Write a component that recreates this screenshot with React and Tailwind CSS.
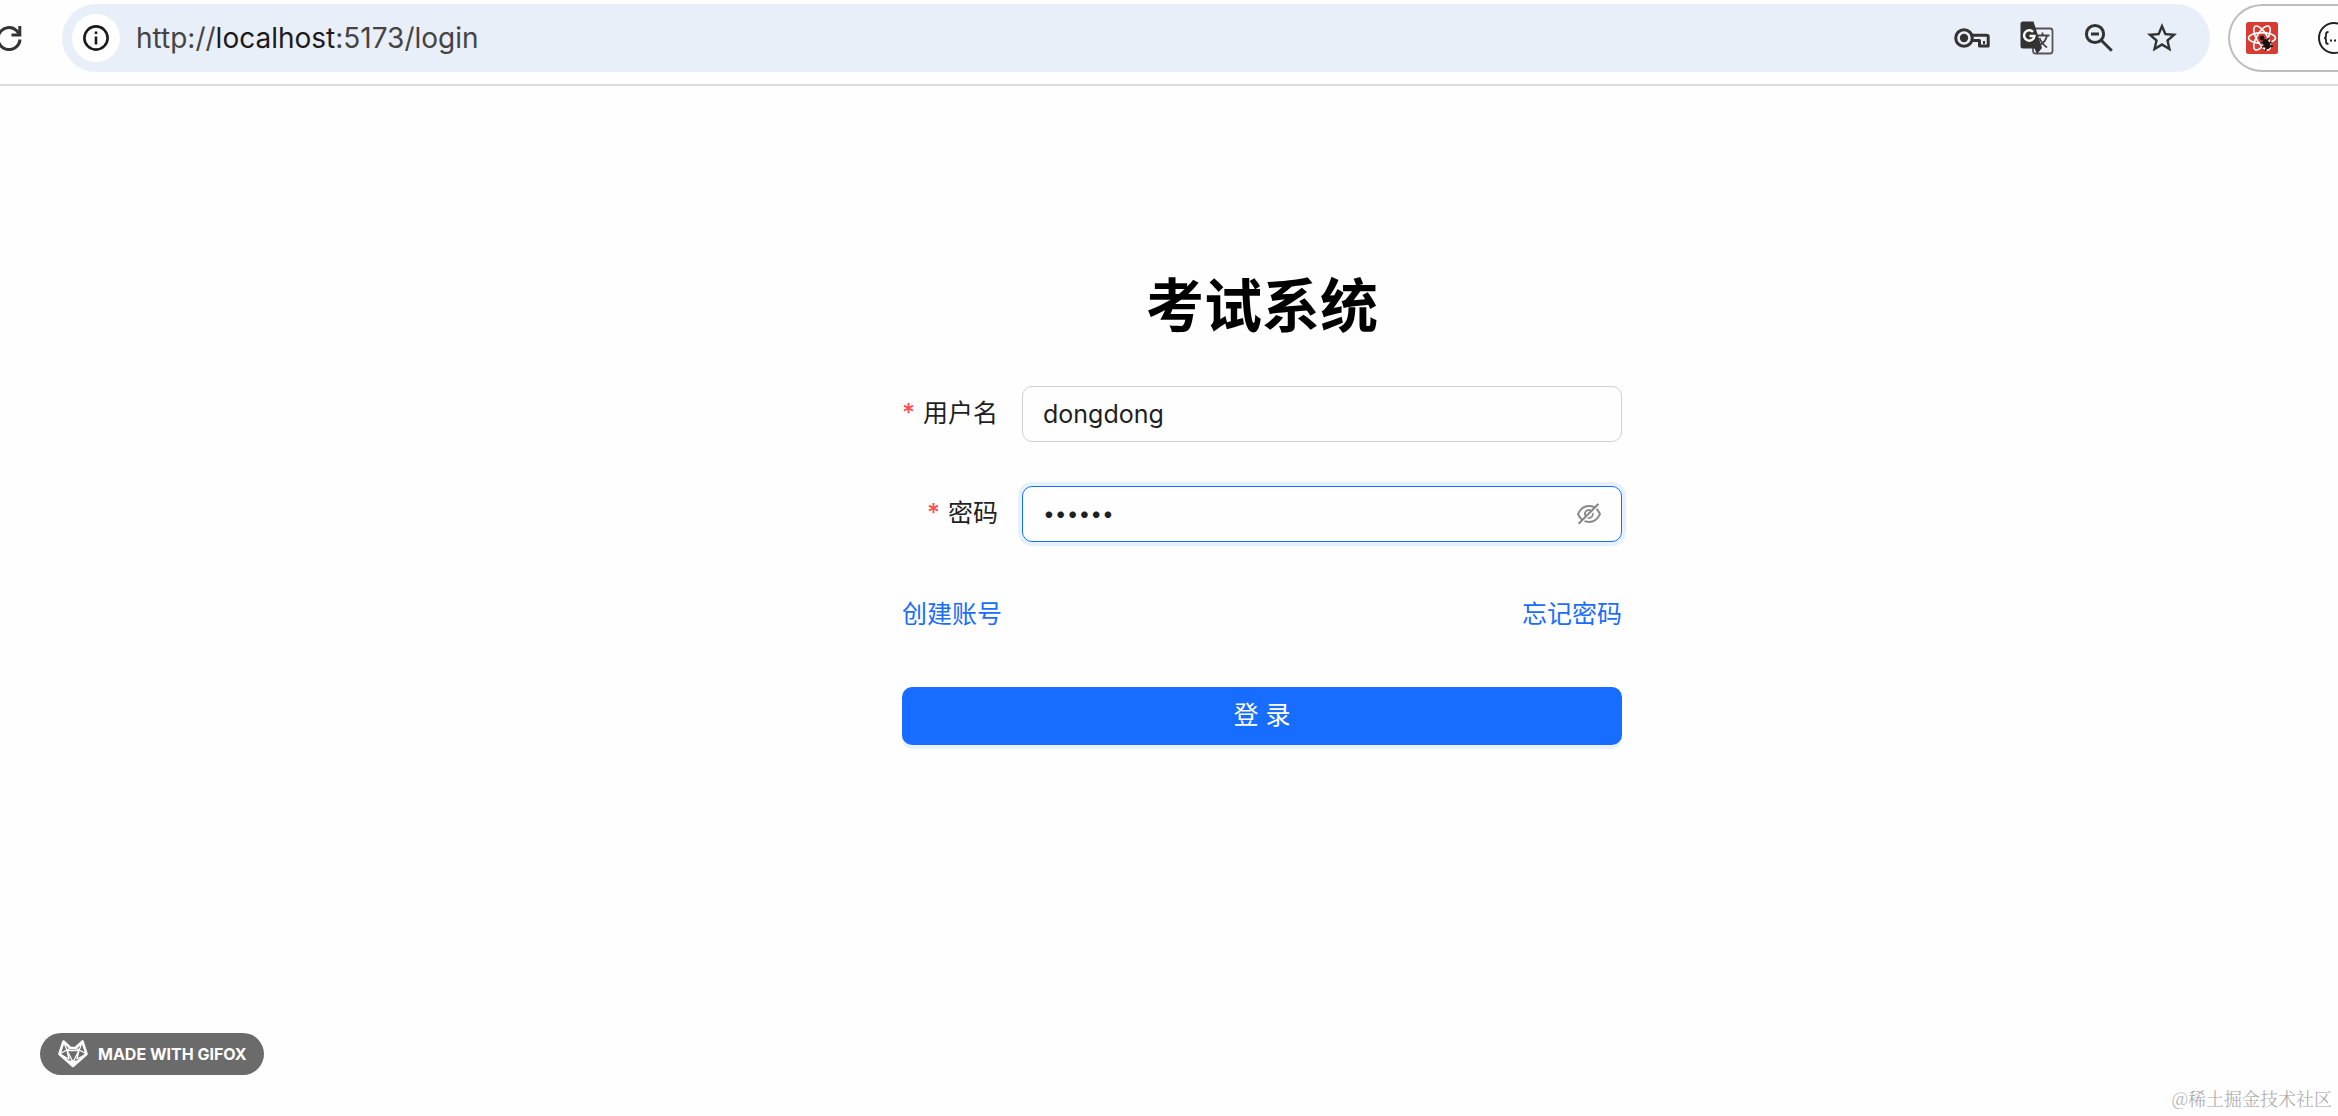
import { useState } from 'react';
import { MdStarBorder } from 'react-icons/md';
import { AiOutlineEyeInvisible, AiOutlineEye } from 'react-icons/ai';

const ReloadIcon = () => (
  <svg width="24" height="26" viewBox="0 0 24 26" fill="none" stroke="#333" strokeWidth="3">
    <path d="M22 14.5A11 11 0 1 1 18.5 5.5L21 8.5" />
    <path d="M21.8 1v9H13.5" />
  </svg>
);

const InfoIcon = () => (
  <svg width="26" height="26" viewBox="0 0 26 26" fill="none" stroke="#1b1b1b" strokeWidth="2.6">
    <circle cx="13" cy="13" r="11.6" />
    <path d="M13 11.5v8M13 6.5v2.6" />
  </svg>
);

const KeyIcon = () => (
  <svg width="36" height="22" viewBox="0 0 36 22" fill="none" stroke="#333" strokeWidth="3">
    <circle cx="10" cy="11" r="8.3" />
    <circle cx="10" cy="11" r="4.2" fill="#333" stroke="none" />
    <path d="M17.6 8.2h15c1.1 0 1.6.6 1.6 1.6v9.2h-8.7v-5.6h-8" strokeLinejoin="round" />
    <path d="M30 14v3" strokeWidth="2" />
  </svg>
);

const TranslateIcon = () => (
  <svg width="34" height="34" viewBox="0 0 34 34">
    <rect x="13" y="7.5" width="19.500" height="25" rx="2.5" fill="#eef2fa" stroke="#555" strokeWidth="1.8" />
    <path d="M3 .5h10.500L22 27l-5 6-2.500-5.500H3A2.500 2.500 0 0 1 .5 25V3A2.500 2.500 0 0 1 3 .5z" fill="#333" />
    <path d="M17 14.500h12.500M22.500 11.500v3M27 14.500c-.8 4-3.500 7.500-7 9.500M19.500 17c1.500 4 4 7 7.500 9.500" fill="none" stroke="#444" strokeWidth="1.8" />
    <path d="M13 10.800A5.200 5.200 0 1 0 14.500 15H9.500" fill="none" stroke="#fff" strokeWidth="2.4" />
  </svg>
);

const ZoomOutIcon = () => (
  <svg width="30" height="30" viewBox="0 0 30 30" fill="none" stroke="#333" strokeWidth="3">
    <circle cx="11" cy="11" r="8.6" />
    <path d="M17.2 17.2L27.800 27.800M7 11h8" />
  </svg>
);

const ReactDevIcon = () => (
  <svg width="32" height="32" viewBox="0 0 32 32">
    <rect width="32" height="32" rx="2.5" fill="#d83b31" />
    <g fill="none" stroke="#fff" strokeWidth="1.6">
      <ellipse cx="16" cy="16" rx="13.5" ry="5.4" />
      <ellipse cx="16" cy="16" rx="13.5" ry="5.4" transform="rotate(60 16 16)" />
      <ellipse cx="16" cy="16" rx="13.5" ry="5.4" transform="rotate(120 16 16)" />
    </g>
    <circle cx="16" cy="16" r="2.4" fill="#1c1414" />
    <g transform="rotate(-30 20.5 22)" fill="#1c1414" stroke="#1c1414" strokeWidth="1.6">
      <ellipse cx="20.5" cy="22" rx="2.4" ry="4.4" />
      <path d="M15.500 18l4 2M15 22.500h11M16 27l4-2M25.500 18l-4 2M25 27l-4-2" />
    </g>
  </svg>
);

const JsonIcon = () => (
  <svg width="32" height="32" viewBox="0 0 32 32">
    <circle cx="16" cy="16" r="15" fill="#fff" stroke="#222" strokeWidth="2" />
    <path d="M10.500 10c-2 0-2.500.8-2.500 2.300v1.600c0 1.200-.6 2-1.800 2.100 1.200.1 1.800.9 1.800 2.100v1.600c0 1.500.5 2.300 2.500 2.300" fill="none" stroke="#222" strokeWidth="1.8" />
    <path d="M12 18.500h2M16 18.500h2M20 18.500h2" stroke="#222" strokeWidth="2" />
  </svg>
);

const FoxIcon = () => (
  <svg width="30" height="28" viewBox="0 0 30 28" fill="none" stroke="#fff" strokeLinejoin="round">
    <path d="M5.500 1.500L12.500 8h5L24.500 1.500l4 12.500L15 26 1.500 14z" strokeWidth="2.6" />
    <path d="M5.500 1.500L9 10.500h12l3.500-9M1.500 14L12.500 8M28.500 14L17.500 8M9 10.500L15 22l6-11.500M1.500 14l9.500 5 -2-8.500M28.500 14L19 19l2-8.500" strokeWidth="1.3" />
    <path d="M11 21h8l-4 5z" fill="#fff" />
  </svg>
);

function BrowserBar() {
  return (
    <header className="flex h-[86px] items-start overflow-hidden border-b-2 border-[#dcdcdc] pt-1">
      <button aria-label="Reload" className="-ml-0.5 flex h-[68px] w-16 shrink-0 items-center">
        <ReloadIcon />
      </button>
      <div className="flex h-[68px] min-w-0 flex-1 items-center rounded-full bg-[#e9eff9] pl-2.5 pr-[30px]">
        <button aria-label="Site information" className="flex size-12 shrink-0 items-center justify-center rounded-full bg-[#fefefe]">
          <InfoIcon />
        </button>
        <div className="ml-4 flex-1 truncate font-[Inter,sans-serif] text-[28px] text-[#444]">
          http://<span className="text-[#1b1b1b]">localhost</span>:5173/login
        </div>
        <div className="flex shrink-0 items-center gap-[30px]">
          <button aria-label="Passwords"><KeyIcon /></button>
          <button aria-label="Translate"><TranslateIcon /></button>
          <button aria-label="Zoom out"><ZoomOutIcon /></button>
          <button aria-label="Bookmark"><MdStarBorder size={36} color="#333" /></button>
        </div>
      </div>
      <div className="ml-[18px] flex h-[68px] w-[110px] shrink-0 items-center gap-10 rounded-l-full border-2 border-r-0 border-[#bdbdbd] pl-4">
        <button aria-label="React Developer Tools" className="shrink-0"><ReactDevIcon /></button>
        <button aria-label="JSON viewer" className="shrink-0"><JsonIcon /></button>
      </div>
    </header>
  );
}

function Field({ id, label, children }) {
  return (
    <div className="flex h-14 items-center justify-end">
      <label htmlFor={id} className="mr-6 shrink-0 whitespace-nowrap">
        <span className="mr-2 font-medium text-[#ff4d4f]">*</span>{label}
      </label>
      {children}
    </div>
  );
}

export default function App() {
  const [username, setUsername] = useState('dongdong');
  const [password, setPassword] = useState('123456');
  const [visible, setVisible] = useState(false);

  return (
    <div className="relative min-h-screen overflow-hidden bg-[#fefefe] font-[Inter,'Noto_Sans_CJK_SC',sans-serif] text-[25px] text-[#1f1f1f]">
      <BrowserBar />

      <main className="flex flex-col items-center pl-[186px] pt-[180px]">
        <h1 className="text-[58px] leading-20 font-bold text-black">考试系统</h1>

        <form className="mt-10 w-[720px]" onSubmit={(e) => e.preventDefault()}>
          <Field id="username" label="用户名">
            <input
              id="username"
              value={username}
              onChange={(e) => setUsername(e.target.value)}
              className="h-14 w-[600px] shrink-0 rounded-[10px] border border-[#d0d0d0] px-5 outline-none"
            />
          </Field>

          <div className="mt-11">
            <Field id="password" label="密码">
              <div className="flex h-14 w-[600px] shrink-0 items-center rounded-[10px] border border-[#1a6dff] pr-[18px] pl-5 ring-4 ring-[#e6f1fe]">
                <input
                  id="password"
                  type={visible ? 'text' : 'password'}
                  value={password}
                  onChange={(e) => setPassword(e.target.value)}
                  className="min-w-0 flex-1 text-[21px] outline-none"
                />
                <button type="button" aria-label="显示密码" onClick={() => setVisible(!visible)} className="text-[#888]">
                  {visible ? <AiOutlineEye size={28} /> : <AiOutlineEyeInvisible size={28} />}
                </button>
              </div>
            </Field>
          </div>

          <div className="mt-[45px] flex h-14 items-center justify-between text-[#1a6dff]">
            <a href="#register">创建账号</a>
            <a href="#forgot">忘记密码</a>
          </div>

          <button type="submit" className="mt-11 h-[58px] w-full rounded-[10px] bg-[#166dff] text-white shadow-[0_4px_0_#e9f1fe]">
            登 录
          </button>
        </form>
      </main>

      <div className="absolute bottom-[41px] left-10 flex h-[42px] w-56 items-center gap-2.5 rounded-full bg-[#6b6b6b] pl-[18px] font-[Inter,sans-serif] text-base font-bold whitespace-nowrap text-white">
        <FoxIcon />
        MADE WITH GIFOX
      </div>
      <div className="absolute right-1.5 bottom-1.5 font-['Noto_Serif_CJK_SC','Noto_Sans_CJK_SC',serif] text-[18px] leading-6 font-light text-[#a8a8a8]">
        @稀土掘金技术社区
      </div>
    </div>
  );
}
